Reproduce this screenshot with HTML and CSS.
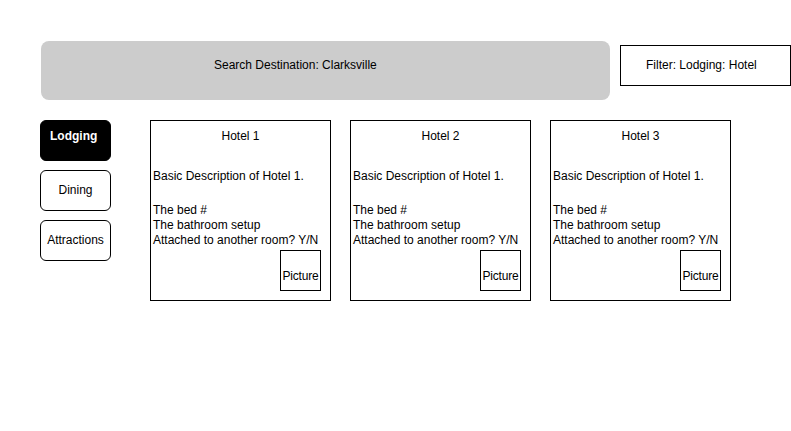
FILE: index.html
```html
<!DOCTYPE html>
<html lang="en">
  <head>
    <meta charset="UTF-8" />
    <title>Hotel Search</title>
    <link rel="stylesheet" href="styles.css">
  </head>
  <body>
    <div class="page">
      <div class="top-row">
        <div class="search-bar">Search Destination: Clarksville</div>
        <div class="filter-box">Filter: Lodging: Hotel</div>
      </div>

      <div class="main-row">
        <div class="sidebar">
          <div class="tab tab-active">Lodging</div>
          <div class="tab">Dining</div>
          <div class="tab">Attractions</div>
        </div>

        <div class="cards">
          <div class="card">
            <div class="card-title">Hotel 1</div>
            <div class="card-desc">Basic Description of Hotel 1.</div>
            <div class="card-details">
              <div>The bed #</div>
              <div>The bathroom setup</div>
              <div>Attached to another room? Y/N</div>
            </div>
            <div class="picture">Picture</div>
          </div>

          <div class="card">
            <div class="card-title">Hotel 2</div>
            <div class="card-desc">Basic Description of Hotel 1.</div>
            <div class="card-details">
              <div>The bed #</div>
              <div>The bathroom setup</div>
              <div>Attached to another room? Y/N</div>
            </div>
            <div class="picture">Picture</div>
          </div>

          <div class="card">
            <div class="card-title">Hotel 3</div>
            <div class="card-desc">Basic Description of Hotel 1.</div>
            <div class="card-details">
              <div>The bed #</div>
              <div>The bathroom setup</div>
              <div>Attached to another room? Y/N</div>
            </div>
            <div class="picture">Picture</div>
          </div>
        </div>
      </div>
    </div>
  </body>
</html>
```

FILE: styles.css
```css
* {
  margin: 0;
  padding: 0;
  box-sizing: border-box;
}

body {
  width: 791px;
  height: 431px;
  overflow: hidden;
  background: #ffffff;
  font-family: "Liberation Sans", Arial, sans-serif;
  font-size: 12px;
  line-height: 15px;
  color: #000000;
}

.page {
  padding: 41px 0 0 40px;
}

.top-row {
  display: flex;
  align-items: flex-start;
}

.search-bar {
  width: 569px;
  height: 59px;
  margin-left: 1px;
  padding: 17px 0 0 173px;
  background: #cccccc;
  border-radius: 8px;
  color: #000;
}

.filter-box {
  width: 171px;
  height: 41px;
  margin: 4px 0 0 10px;
  padding: 12px 0 0 25px;
  border: 1px solid #000;
}

.main-row {
  display: flex;
  margin-top: 20px;
}

.sidebar {
  display: flex;
  flex-direction: column;
  gap: 9px;
  width: 71px;
}

.tab {
  height: 41px;
  border: 1px solid #000;
  border-radius: 6px;
  display: flex;
  align-items: center;
  justify-content: center;
}

.tab-active {
  background: #000;
  color: #fff;
  font-weight: bold;
  display: block;
  padding: 8px 0 0 9px;
}

.cards {
  display: flex;
  gap: 19px;
  margin-left: 39px;
}

.card {
  width: 181px;
  height: 181px;
  border: 1px solid #000;
  display: flex;
  flex-direction: column;
  padding-left: 2px;
}

.card-title {
  margin-top: 8px;
  text-align: center;
  padding-right: 2px;
}

.card-desc {
  margin-top: 25px;
}

.card-details {
  margin-top: 19px;
}

.picture {
  align-self: flex-end;
  width: 41px;
  height: 41px;
  margin: 2px 9px 0 0;
  padding-top: 18px;
  border: 1px solid #000;
  text-align: center;
  letter-spacing: -0.2px;
  white-space: nowrap;
}
```
